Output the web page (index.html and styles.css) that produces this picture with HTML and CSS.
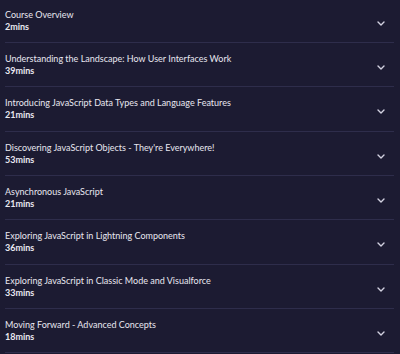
FILE: index.html
```html
<!DOCTYPE html>
<html lang="en">
<head>
  <meta charset="UTF-8" />
  <title>Course Contents</title>
  <meta name="viewport" content="width=device-width, initial-scale=1.0" />
  <link rel="stylesheet" href="styles.css">
</head>
<body>
  <ul class="modules">
    <li class="module">
      <div class="info"><span class="title">Course Overview</span><span class="mins">2mins</span></div>
      <svg class="chev" viewBox="0 0 8 5"><path d="M1 1l3 3 3-3" /></svg>
    </li>
    <li class="module">
      <div class="info"><span class="title">Understanding the Landscape: How User Interfaces Work</span><span class="mins">39mins</span></div>
      <svg class="chev" viewBox="0 0 8 5"><path d="M1 1l3 3 3-3" /></svg>
    </li>
    <li class="module">
      <div class="info"><span class="title">Introducing JavaScript Data Types and Language Features</span><span class="mins">21mins</span></div>
      <svg class="chev" viewBox="0 0 8 5"><path d="M1 1l3 3 3-3" /></svg>
    </li>
    <li class="module">
      <div class="info"><span class="title">Discovering JavaScript Objects - They're Everywhere!</span><span class="mins">53mins</span></div>
      <svg class="chev" viewBox="0 0 8 5"><path d="M1 1l3 3 3-3" /></svg>
    </li>
    <li class="module">
      <div class="info"><span class="title">Asynchronous JavaScript</span><span class="mins">21mins</span></div>
      <svg class="chev" viewBox="0 0 8 5"><path d="M1 1l3 3 3-3" /></svg>
    </li>
    <li class="module">
      <div class="info"><span class="title">Exploring JavaScript in Lightning Components</span><span class="mins">36mins</span></div>
      <svg class="chev" viewBox="0 0 8 5"><path d="M1 1l3 3 3-3" /></svg>
    </li>
    <li class="module">
      <div class="info"><span class="title">Exploring JavaScript in Classic Mode and Visualforce</span><span class="mins">33mins</span></div>
      <svg class="chev" viewBox="0 0 8 5"><path d="M1 1l3 3 3-3" /></svg>
    </li>
    <li class="module">
      <div class="info"><span class="title">Moving Forward - Advanced Concepts</span><span class="mins">18mins</span></div>
      <svg class="chev" viewBox="0 0 8 5"><path d="M1 1l3 3 3-3" /></svg>
    </li>
  </ul>
</body>
</html>
```

FILE: styles.css
```css
body {
  font-family: Lato, 'Noto Sans', sans-serif;
  background-color: #1c1b32;
  color: #e8e7f0;
  margin: 0;
  padding: 0;
}
.modules {
  list-style: none;
  margin: -1.33px 0 0;
  padding: 0 6px 0 5px;
}
.module {
  box-sizing: border-box;
  height: 44.33px;
  display: flex;
  align-items: flex-start;
  justify-content: space-between;
  border-bottom: 1px solid #2e2d4b;
}
.info {
  display: flex;
  flex-direction: column;
  padding-top: 10px;
}
.title {
  font-size: 9px;
  line-height: 12px;
}
.mins {
  font-size: 9px;
  font-weight: 700;
  line-height: 12px;
}
.chev {
  width: 8px;
  height: 5px;
  margin: 22px 9px 0 0;
  fill: none;
  stroke: #d2d1e0;
  stroke-width: 1.4;
  stroke-linecap: round;
  stroke-linejoin: round;
}
```
